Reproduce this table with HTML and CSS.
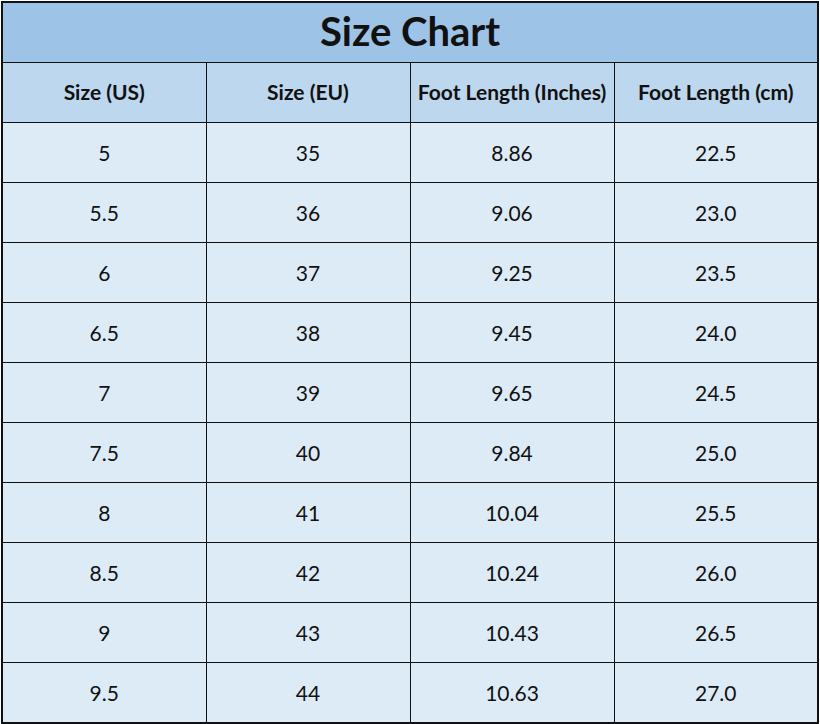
FILE: index.html
```html
<!DOCTYPE html>
<html>
<head>
<meta charset="utf-8">
<link rel="stylesheet" href="styles.css">
</head>
<body>
<table class="chart">
  <colgroup><col><col><col><col></colgroup>
  <tr class="title"><th colspan="4">Size Chart</th></tr>
  <tr class="head"><th>Size (US)</th><th>Size (EU)</th><th>Foot Length (Inches)</th><th>Foot Length (cm)</th></tr>
  <tr><td>5</td><td>35</td><td>8.86</td><td>22.5</td></tr>
  <tr><td>5.5</td><td>36</td><td>9.06</td><td>23.0</td></tr>
  <tr><td>6</td><td>37</td><td>9.25</td><td>23.5</td></tr>
  <tr><td>6.5</td><td>38</td><td>9.45</td><td>24.0</td></tr>
  <tr><td>7</td><td>39</td><td>9.65</td><td>24.5</td></tr>
  <tr><td>7.5</td><td>40</td><td>9.84</td><td>25.0</td></tr>
  <tr><td>8</td><td>41</td><td>10.04</td><td>25.5</td></tr>
  <tr><td>8.5</td><td>42</td><td>10.24</td><td>26.0</td></tr>
  <tr><td>9</td><td>43</td><td>10.43</td><td>26.5</td></tr>
  <tr><td>9.5</td><td>44</td><td>10.63</td><td>27.0</td></tr>
</table>
</body>
</html>
```

FILE: styles.css
```css
html, body {
  margin: 0;
  padding: 0;
  background: #ffffff;
}
body {
  padding: 1px 0 0 1px;
  font-family: Lato, "Liberation Sans", sans-serif;
  color: #111111;
}
.chart {
  border-collapse: collapse;
  table-layout: fixed;
  width: 817px;
  border: 2px solid #111111;
}
.chart col {
  width: 204px;
}
.chart th, .chart td {
  border: 1px solid #111111;
  padding: 0;
  text-align: center;
  vertical-align: middle;
}
.title th {
  height: 55px;
  background: #9dc3e6;
  font-size: 40px;
  line-height: 44px;
  font-weight: 700;
  padding-bottom: 4px;
}
.head th {
  height: 56px;
  background: #bdd7ee;
  font-size: 21px;
  font-weight: 700;
  padding-bottom: 3px;
}
.chart td {
  height: 58px;
  background: #ddebf7;
  font-size: 21px;
  font-weight: 400;
  padding-bottom: 1px;
}
```
